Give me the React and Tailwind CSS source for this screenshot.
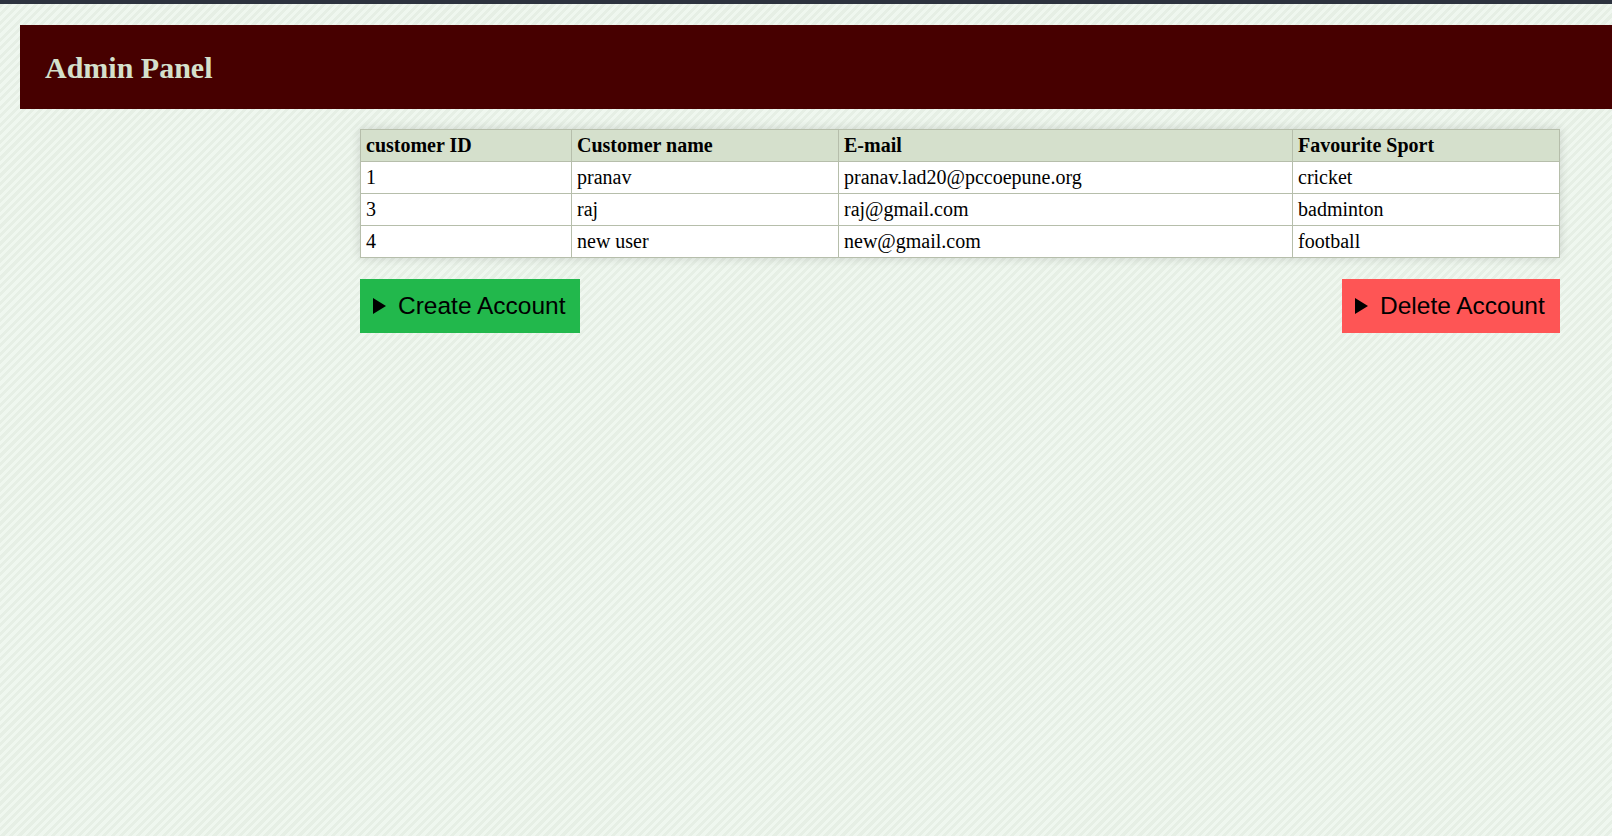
import React from 'react';

const customers = [
  { id: 1, name: 'pranav', email: 'pranav.lad20@pccoepune.org', sport: 'cricket' },
  { id: 3, name: 'raj', email: 'raj@gmail.com', sport: 'badminton' },
  { id: 4, name: 'new user', email: 'new@gmail.com', sport: 'football' },
];

const App = () => {
  return (
    <div className="min-h-[836px] w-full overflow-hidden bg-[#edf5ec] bg-[repeating-linear-gradient(135deg,#eff7ef_0px,#eff7ef_3px,#e6efe5_3px,#e6efe5_6px)]">
      {/* top strip */}
      <div className="h-[4px] w-full bg-[#2d333f]" />

      {/* header */}
      <div className="ml-5 mt-[21px] flex h-[84px] items-center bg-[#470000] px-[25px]">
        <h1 className="text-[30px] font-bold text-[#d5e0cc] [font-family:'Liberation_Serif',serif]">Admin Panel</h1>
      </div>

      <div className="ml-[360px] mt-5 w-[1200px]">
        {/* customers table */}
        <table className="w-[1199px] table-fixed border-collapse bg-white text-[20px] leading-[23px] text-black shadow-[0_0_10px_rgba(0,0,0,0.15)] [font-family:'Liberation_Serif',serif]">
          <colgroup>
            <col className="w-[211px]" />
            <col className="w-[267px]" />
            <col className="w-[454px]" />
            <col className="w-[267px]" />
          </colgroup>
          <thead>
            <tr className="bg-[#d5e0cc]">
              <th className="border border-[#b6beab] px-[5px] py-1 text-left font-bold">customer ID</th>
              <th className="border border-[#b6beab] px-[5px] py-1 text-left font-bold">Customer name</th>
              <th className="border border-[#b6beab] px-[5px] py-1 text-left font-bold">E-mail</th>
              <th className="border border-[#b6beab] px-[5px] py-1 text-left font-bold">Favourite Sport</th>
            </tr>
          </thead>
          <tbody>
            {customers.map((c) => (
              <tr key={c.id}>
                <td className="border border-[#b6beab] px-[5px] py-1">{c.id}</td>
                <td className="border border-[#b6beab] px-[5px] py-1">{c.name}</td>
                <td className="border border-[#b6beab] px-[5px] py-1">{c.email}</td>
                <td className="border border-[#b6beab] px-[5px] py-1">{c.sport}</td>
              </tr>
            ))}
          </tbody>
        </table>

        {/* actions */}
        <div className="mt-[21px] flex items-start justify-between text-[24.5px] text-black [font-family:'Liberation_Sans',Arial,sans-serif]">
          <button className="flex h-[54px] w-[220px] items-center gap-[12px] bg-[#22b84c] pl-[13px]">
            <svg width="13" height="16" viewBox="0 0 13 16"><path d="M0 0 L13 8 L0 16 Z" fill="#000" /></svg>
            <span>Create Account</span>
          </button>
          <button className="flex h-[54px] w-[218px] items-center gap-[12px] bg-[#fe5555] pl-[13px]">
            <svg width="13" height="16" viewBox="0 0 13 16"><path d="M0 0 L13 8 L0 16 Z" fill="#000" /></svg>
            <span>Delete Account</span>
          </button>
        </div>
      </div>
    </div>
  );
};

export default App;
